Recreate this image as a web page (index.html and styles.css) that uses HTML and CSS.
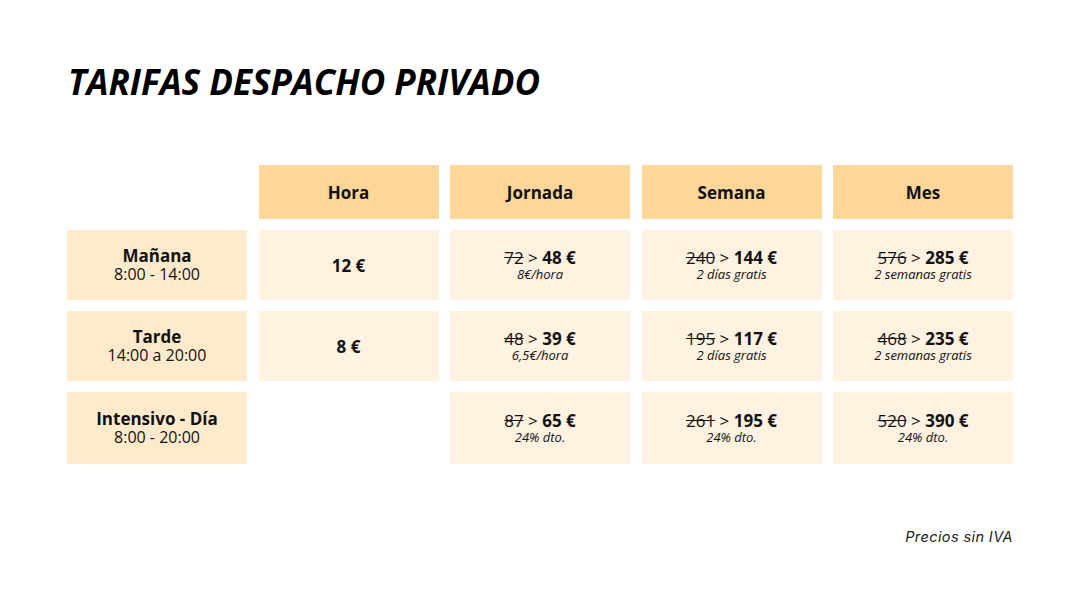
FILE: index.html
```html
<!DOCTYPE html>
<html lang="es">
<head>
<meta charset="utf-8">
<title>Tarifas despacho privado</title>
<link rel="stylesheet" href="styles.css">
</head>
<body>
<main class="page">
  <h1 class="title">TARIFAS DESPACHO PRIVADO</h1>
  <div class="table">
    <div class="blank"></div>
    <div class="head">Hora</div>
    <div class="head">Jornada</div>
    <div class="head">Semana</div>
    <div class="head">Mes</div>

    <div class="label"><strong>Mañana</strong><span>8:00 - 14:00</span></div>
    <div class="cell"><b class="price">12 €</b></div>
    <div class="cell"><p class="line"><s>72</s> &gt; <b>48 €</b></p><em>8€/hora</em></div>
    <div class="cell"><p class="line"><s>240</s> &gt; <b>144 €</b></p><em>2 días gratis</em></div>
    <div class="cell"><p class="line"><s>576</s> &gt; <b>285 €</b></p><em>2 semanas gratis</em></div>

    <div class="label"><strong>Tarde</strong><span>14:00 a 20:00</span></div>
    <div class="cell"><b class="price">8 €</b></div>
    <div class="cell"><p class="line"><s>48</s> &gt; <b>39 €</b></p><em>6,5€/hora</em></div>
    <div class="cell"><p class="line"><s>195</s> &gt; <b>117 €</b></p><em>2 días gratis</em></div>
    <div class="cell"><p class="line"><s>468</s> &gt; <b>235 €</b></p><em>2 semanas gratis</em></div>

    <div class="label"><strong>Intensivo - Día</strong><span>8:00 - 20:00</span></div>
    <div class="blank"></div>
    <div class="cell"><p class="line"><s>87</s> &gt; <b>65 €</b></p><em>24% dto.</em></div>
    <div class="cell"><p class="line"><s>261</s> &gt; <b>195 €</b></p><em>24% dto.</em></div>
    <div class="cell"><p class="line"><s>520</s> &gt; <b>390 €</b></p><em>24% dto.</em></div>
  </div>
  <p class="note">Precios sin IVA</p>
</main>
</body>
</html>
```

FILE: styles.css
```css
* { box-sizing: border-box; }
html, body { margin: 0; padding: 0; background: #ffffff; }
body {
  font-family: "Open Sans", "Liberation Sans", sans-serif;
  color: #111111;
  width: 1080px;
  height: 608px;
  overflow: hidden;
}
.page {
  padding: 58px 67px 0 67px;
  width: 1080px;
}
.title {
  margin: 0;
  font-size: 35px;
  line-height: 48px;
  font-weight: 700;
  font-style: italic;
  color: #000;
  padding-left: 1px;
}
.table {
  margin-top: 59px;
  display: grid;
  grid-template-columns: repeat(5, 180px);
  grid-template-rows: 54px 70px 70px 72px;
  column-gap: 11.5px;
  row-gap: 11px;
}
.head {
  background: #ffd699;
  display: flex;
  align-items: center;
  justify-content: center;
  font-weight: 700;
  font-size: 17px;
  color: #111;
}
.label {
  background: #ffebcc;
  display: flex;
  flex-direction: column;
  align-items: center;
  justify-content: center;
  text-align: center;
}
.label strong {
  font-size: 17px;
  line-height: 18px;
  font-weight: 700;
}
.label span {
  font-size: 16px;
  line-height: 18px;
}
.cell {
  background: #fff2e1;
  display: flex;
  flex-direction: column;
  align-items: center;
  justify-content: center;
  text-align: center;
}
.price {
  font-size: 17px;
  font-weight: 700;
}
.line {
  margin: 0;
  font-size: 17px;
  line-height: 19px;
}
.line b { font-weight: 700; }
.cell em {
  font-size: 13px;
  line-height: 15px;
  font-style: italic;
}
.note {
  width: 946px;
  margin: 64px 0 0 0;
  text-align: right;
  font-family: "Inter", "Liberation Sans", sans-serif;
  font-style: italic;
  font-size: 14.5px;
  letter-spacing: 0.4px;
  color: #222;
}
```
